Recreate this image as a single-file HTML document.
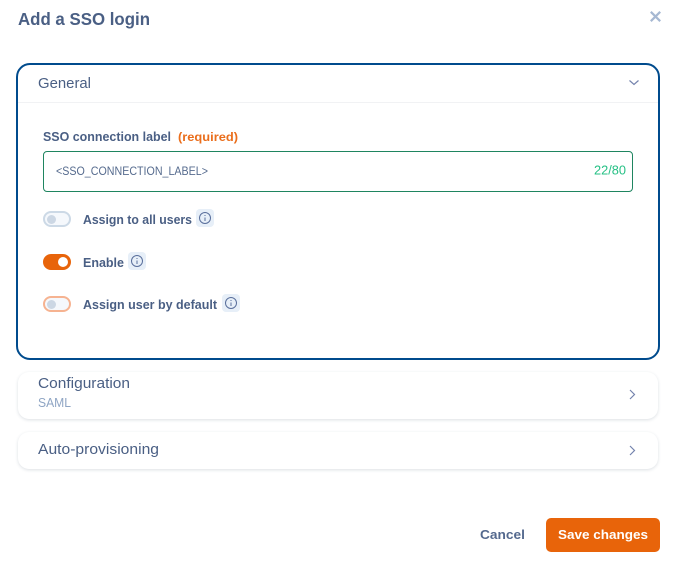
<!DOCTYPE html>
<html lang="en"><head><meta charset="utf-8"><title>Add a SSO login</title>
<style>
html,body{margin:0;padding:0;background:#fff;width:673px;height:561px;overflow:hidden}
.b{position:absolute;box-sizing:border-box}
#panel{left:16px;top:63px;width:644px;height:297px;border:2px solid #004b8d;border-radius:14px;background:#fff}
#div{left:18px;top:102px;width:640px;height:1px;background:#f1f2f4}
#input{left:43px;top:151px;width:590px;height:41px;border:1px solid #1f8560;border-radius:4px}
.card{left:18px;width:640px;background:#fff;border-radius:11px;box-shadow:0 1px 3px rgba(40,60,90,.16)}
#btn{left:546px;top:518px;width:114px;height:34px;background:#e8640a;border-radius:5px}
.tg{left:43px;width:28px;height:16px;border-radius:8px;border:2px solid #ccd9e6;background:#f5f8fc}
.tg i{position:absolute;left:2px;top:1.5px;width:9px;height:9px;border-radius:50%;background:#ccd7e4}
.bd{width:18px;height:18px;border-radius:4px;background:#e7eff8}
svg{position:absolute;left:0;top:0}
text{font-family:"Liberation Sans",sans-serif;fill:#4a5f84}
.s{font-weight:700}
</style></head><body>
<div class="b" id="panel"></div><div class="b" id="div"></div><div class="b" id="input"></div>
<div class="b tg" style="top:211px"><i></i></div>
<div class="b tg" style="top:254px;background:#e8640a;border-color:#e8640a"><i style="left:13px;top:1px;width:10px;height:10px;background:#fff"></i></div>
<div class="b tg" style="top:296px;border-color:#f6b391"><i></i></div>
<div class="b bd" style="left:196px;top:209px"></div>
<div class="b bd" style="left:128px;top:252px"></div>
<div class="b bd" style="left:222px;top:294px"></div>
<div class="b card" style="top:372px;height:47px"></div>
<div class="b card" style="top:432px;height:37px"></div>
<div class="b" id="btn"></div>
<svg width="673" height="561" viewBox="0 0 673 561">
<text class="s" x="18" y="25" font-size="17.5" textLength="132" lengthAdjust="spacingAndGlyphs">Add a SSO login</text>
<text x="38" y="88" font-size="14.5" textLength="53" lengthAdjust="spacingAndGlyphs">General</text>
<text class="s" x="43" y="141" font-size="12.5" textLength="128" lengthAdjust="spacingAndGlyphs">SSO connection label</text>
<text class="s" x="178" y="141" font-size="12" textLength="60" lengthAdjust="spacingAndGlyphs" style="fill:#ea6e1c">(required)</text>
<text x="56" y="175" font-size="11.5" textLength="152" lengthAdjust="spacingAndGlyphs" style="fill:#566b8e">&lt;SSO_CONNECTION_LABEL&gt;</text>
<text x="594" y="174.5" font-size="12.5" textLength="32" lengthAdjust="spacingAndGlyphs" style="fill:#26c085">22/80</text>
<text class="s" x="83" y="224" font-size="12.5" textLength="109" lengthAdjust="spacingAndGlyphs">Assign to all users</text>
<text class="s" x="83" y="267" font-size="12.5" textLength="41" lengthAdjust="spacingAndGlyphs">Enable</text>
<text class="s" x="83" y="309" font-size="12.5" textLength="134" lengthAdjust="spacingAndGlyphs">Assign user by default</text>
<text x="38" y="388" font-size="14.5" textLength="92" lengthAdjust="spacingAndGlyphs">Configuration</text>
<text x="38" y="407" font-size="12.5" textLength="33" lengthAdjust="spacingAndGlyphs" style="fill:#8fa5c4">SAML</text>
<text x="38" y="454" font-size="14.5" textLength="121" lengthAdjust="spacingAndGlyphs">Auto-provisioning</text>
<text class="s" x="480" y="539" font-size="12.5" textLength="45" lengthAdjust="spacingAndGlyphs" style="fill:#54698e">Cancel</text>
<text class="s" x="558" y="539" font-size="12.5" textLength="90" lengthAdjust="spacingAndGlyphs" style="fill:#fff">Save changes</text>
<path d="M650.8 11.8L660.2 21.2M660.2 11.8L650.8 21.2" stroke="#a6b8d2" stroke-width="2.2" fill="none"/>
<path d="M629.5 80.5L634 84.5L638.5 80.5" stroke="#7483ad" stroke-width="1.2" fill="none"/>
<path d="M630 390L634.5 394.5L630 399" stroke="#7483ad" stroke-width="1.2" fill="none"/>
<path d="M630 446L634.5 450.5L630 455" stroke="#7483ad" stroke-width="1.2" fill="none"/>
<g fill="none" stroke="#5a6f9c" stroke-width="1">
<circle cx="205" cy="218" r="5.5"/><path d="M205 217.5V221M205 215V216"/>
<circle cx="137" cy="261" r="5.5"/><path d="M137 260.5V264M137 258V259"/>
<circle cx="231" cy="303" r="5.5"/><path d="M231 302.5V306M231 300V301"/>
</g>
</svg>
</body></html>
